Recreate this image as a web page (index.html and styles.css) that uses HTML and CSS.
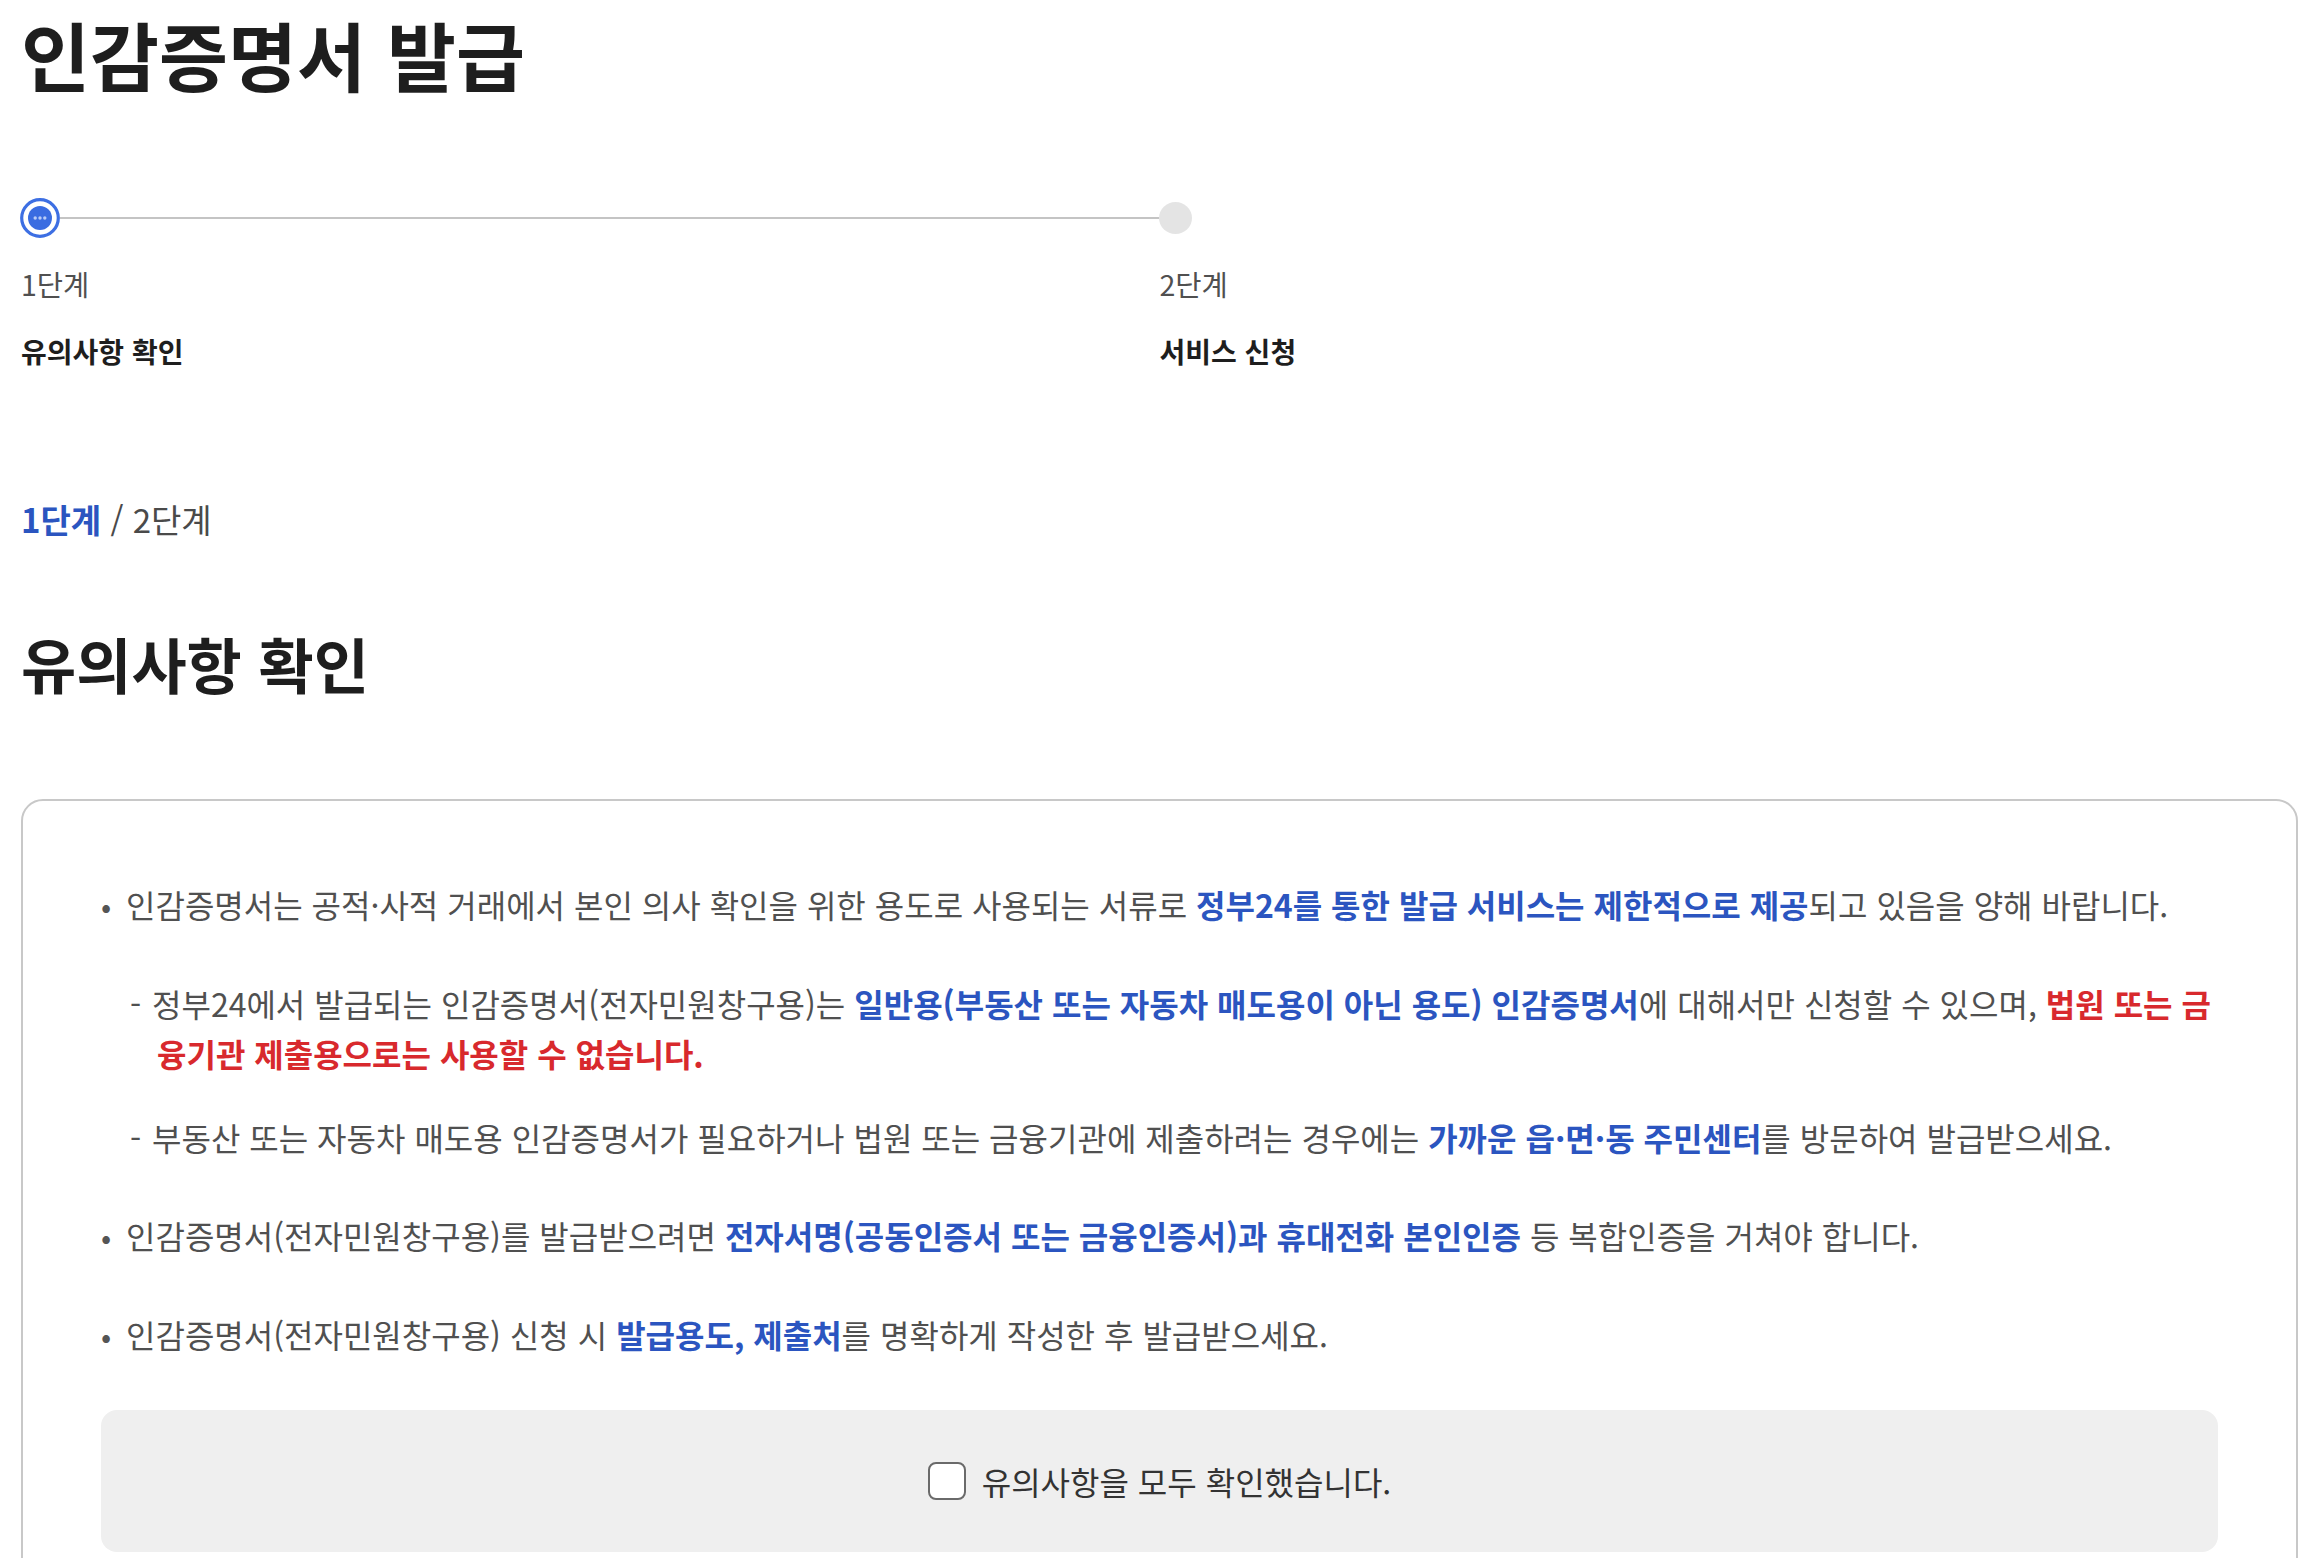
FILE: index.html
```html
<!DOCTYPE html>
<html lang="ko">
<head>
  <meta charset="UTF-8" />
  <meta name="viewport" content="width=device-width, initial-scale=1" />
  <title>인감증명서 발급</title>
  <link rel="stylesheet" href="styles.css">
</head>
<body>

<div class="page">
  <h1 class="page-title">인감증명서 발급</h1>

  <!-- 진행 단계 -->
  <ol class="steps">
    <li class="step current">
      <div class="step-head">
        <svg class="step-dot" width="40" height="40" viewBox="0 0 40 40">
          <circle cx="20" cy="20" r="18.3" fill="#fff" stroke="#3d6fe3" stroke-width="3.2" />
          <circle cx="20" cy="20" r="12" fill="#3a6ce1" />
          <circle cx="15.2" cy="20" r="1.7" fill="#b9cbf6" />
          <circle cx="20" cy="20" r="1.7" fill="#b9cbf6" />
          <circle cx="24.8" cy="20" r="1.7" fill="#b9cbf6" />
        </svg>
        <span class="step-line"></span>
      </div>
      <p class="step-no">1단계</p>
      <p class="step-name">유의사항 확인</p>
    </li>
    <li class="step">
      <div class="step-head">
        <span class="step-dot idle"></span>
      </div>
      <p class="step-no">2단계</p>
      <p class="step-name">서비스 신청</p>
    </li>
  </ol>

  <p class="crumb"><strong>1단계</strong> / 2단계</p>

  <h2 class="section-title">유의사항 확인</h2>

  <div class="notice-card">
    <ul class="notes">
      <li>인감증명서는 공적·사적 거래에서 본인 의사 확인을 위한 용도로 사용되는 서류로 <b class="blue">정부24를 통한 발급 서비스는 제한적으로 제공</b>되고 있음을 양해 바랍니다.
        <ul class="sub-notes">
          <li>정부24에서 발급되는 인감증명서(전자민원창구용)는 <b class="blue">일반용(부동산 또는 자동차 매도용이 아닌 용도) 인감증명서</b>에 대해서만 신청할 수 있으며, <b class="red">법원 또는 금융기관 제출용으로는 사용할 수 없습니다.</b></li>
          <li>부동산 또는 자동차 매도용 인감증명서가 필요하거나 법원 또는 금융기관에 제출하려는 경우에는 <b class="blue">가까운 읍·면·동 주민센터</b>를 방문하여 발급받으세요.</li>
        </ul>
      </li>
      <li>인감증명서(전자민원창구용)를 발급받으려면 <b class="blue">전자서명(공동인증서 또는 금융인증서)과 휴대전화 본인인증</b> 등 복합인증을 거쳐야 합니다.</li>
      <li>인감증명서(전자민원창구용) 신청 시 <b class="blue">발급용도, 제출처</b>를 명확하게 작성한 후 발급받으세요.</li>
    </ul>

    <div class="agree-box">
      <label class="agree">
        <input type="checkbox" />
        <span class="check-mark"></span>
        유의사항을 모두 확인했습니다.
      </label>
    </div>
  </div>
</div>

</body>
</html>
```

FILE: styles.css
```css
body {
  margin: 0;
  background-color: #fff;
  font-family: "Noto Sans CJK KR", "Noto Sans", sans-serif;
  color: #1e1e1e;
}

.page {
  padding: 0 18px 0 21px;
}

.page-title {
  margin: 6px 0 0;
  font-size: 75px;
  line-height: 96px;
  font-weight: 700;
  color: #1e1e1e;
}

/* 진행 단계 */
.steps {
  list-style: none;
  display: flex;
  margin: 96px 0 0;
  padding: 0;
}

.step {
  flex: 1;
}

.step-head {
  display: flex;
  align-items: center;
  height: 40px;
  margin-left: -1px;
}

.step-dot {
  flex: none;
  display: block;
}

.step-dot.idle {
  width: 33px;
  height: 32px;
  border-radius: 50%;
  background-color: #e4e4e4;
}

.step-line {
  flex: 1;
  height: 2px;
  background-color: #c4c4c4;
}

.step-no {
  margin: 26px 0 0;
  font-size: 28.5px;
  line-height: 40px;
  color: #505050;
}

.step-name {
  margin: 27px 0 0;
  font-size: 28px;
  line-height: 40px;
  font-weight: 700;
  color: #1e1e1e;
}

.crumb {
  margin: 128px 0 0;
  font-size: 33px;
  line-height: 40px;
  color: #4a4a4a;
}

.crumb strong {
  color: #2b55c0;
}

.section-title {
  margin: 88px 0 0;
  font-size: 60px;
  line-height: 72px;
  font-weight: 700;
  color: #1e1e1e;
}

/* 유의사항 카드 */
.notice-card {
  margin-top: 100px;
  border: 2px solid #c8c8c8;
  border-radius: 22px;
  padding: 78px 78px 60px;
}

.notes {
  list-style: none;
  margin: 0;
  padding: 0;
  display: flex;
  flex-direction: column;
  gap: 48px;
  font-size: 32px;
  line-height: 50px;
  color: #505050;
}

.notes > li {
  padding-left: 25px;
}

.notes > li::before {
  content: "•";
  display: inline-block;
  width: 25px;
  margin-left: -25px;
  font-size: 30px;
  color: #555;
}

.sub-notes {
  list-style: none;
  margin: 48px 0 0;
  padding: 0;
  display: flex;
  flex-direction: column;
  gap: 34px;
}

.sub-notes li {
  padding-left: 31px;
}

.sub-notes li::before {
  content: "-";
  display: inline-block;
  width: 22px;
  margin-left: -27px;
}

b.blue {
  font-weight: 700;
  color: #2b55c0;
}

b.red {
  font-weight: 700;
  color: #d8292d;
}

/* 확인 체크 */
.agree-box {
  margin-top: 50px;
  height: 142px;
  border-radius: 16px;
  background-color: #efefef;
  display: flex;
  align-items: center;
  justify-content: center;
}

.agree {
  display: flex;
  align-items: center;
  gap: 16px;
  font-size: 32px;
  line-height: 40px;
  color: #333;
  cursor: pointer;
}

.agree input {
  display: none;
}

.check-mark {
  width: 38px;
  height: 38px;
  box-sizing: border-box;
  border: 2.5px solid #6a6a6a;
  border-radius: 8px;
  background-color: #fff;
}
```
